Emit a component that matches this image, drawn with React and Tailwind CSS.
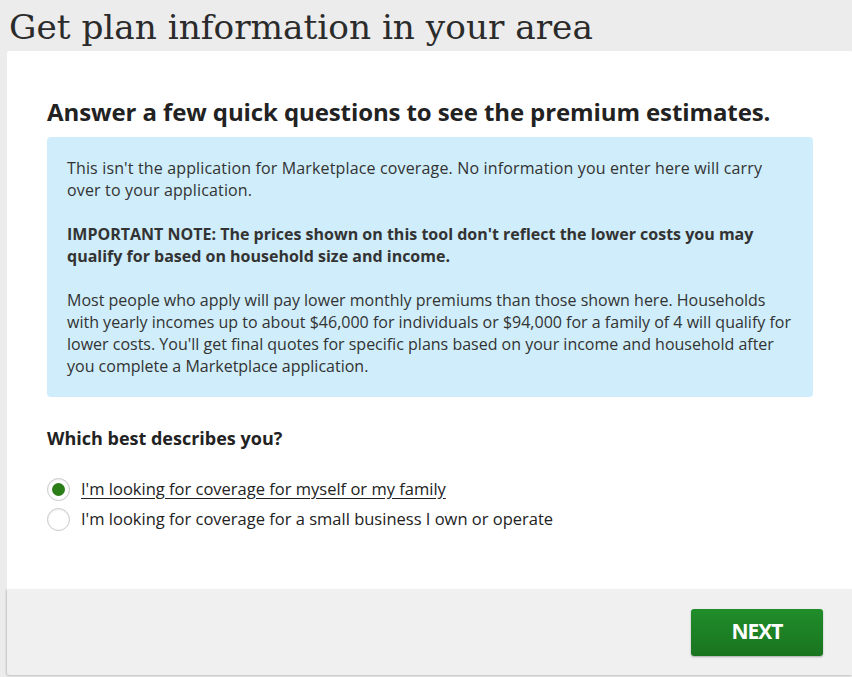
import React, { useState } from "react";

const options = [
  { id: "individual", label: "I'm looking for coverage for myself or my family" },
  { id: "business", label: "I'm looking for coverage for a small business I own or operate" },
];

const Radio = ({ checked, label, onChange, focused }) => (
  <label className="flex items-center h-[30px] cursor-pointer" onClick={onChange}>
    <span className="w-[23px] h-[23px] rounded-full border border-[#c8c8c8] bg-white shadow-[inset_0_1px_2px_rgba(0,0,0,0.08)] flex items-center justify-center shrink-0">
      {checked && <span className="w-[13px] h-[13px] rounded-full bg-[#2b7d17]" />}
    </span>
    <span className={"ml-[11px] text-[16.5px] text-[#222] " + (focused ? "underline underline-offset-[3px]" : "")}>
      {label}
    </span>
  </label>
);

const App = () => {
  const [choice, setChoice] = useState("individual");

  return (
    <div
      className="w-[852px] h-[677px] overflow-hidden bg-[#ececec]"
      style={{ fontFamily: "'Open Sans', 'Liberation Sans', sans-serif" }}
    >
      {/* page title */}
      <h1
        className="h-[51px] pl-[9px] pt-[6px] text-[34.3px] leading-[42px] text-[#2b2b2b]"
        style={{ fontFamily: "'DejaVu Serif', 'Liberation Serif', serif" }}
      >
        Get plan information in your area
      </h1>

      <div className="ml-[7px] w-[846px] rounded-t-[3px] bg-white">
        <div className="px-[40px] pt-[46px] pb-[44px] h-[538px]">
          <h2 className="text-[24px] font-bold leading-[30px] text-[#222] tracking-[-0.1px]">
            Answer a few quick questions to see the premium estimates.
          </h2>

          <div className="mt-[10px] rounded-[4px] bg-[#cfedfa] px-[20px] pt-[20px] pb-[20px] text-[16px] leading-[22px] text-[#333]">
            <p className="tracking-[0.15px]">
              This isn't the application for Marketplace coverage. No information you enter here will carry
              <br />
              over to your application.
            </p>
            <p className="mt-[22px] font-bold">
              IMPORTANT NOTE: The prices shown on this tool don't reflect the lower costs you may qualify
              for based on household size and income.
            </p>
            <p className="mt-[22px]">
              Most people who apply will pay lower monthly premiums than those shown here. Households with
              yearly incomes up to about $46,000 for individuals or $94,000 for a family of 4 will qualify
              for lower costs. You'll get final quotes for specific plans based on your income and household
              after you complete a Marketplace application.
            </p>
          </div>

          <h3 className="mt-[29px] text-[18px] font-bold leading-[24px] text-[#222]">
            Which best describes you?
          </h3>

          <div className="mt-[24px] flex flex-col">
            {options.map((o) => (
              <Radio
                key={o.id}
                label={o.label}
                checked={choice === o.id}
                focused={choice === o.id}
                onChange={() => setChoice(o.id)}
              />
            ))}
          </div>
        </div>

        <div className="h-[86px] bg-[#f0f0f0] rounded-b-[3px] shadow-[-1px_1px_2px_rgba(0,0,0,0.18)] flex items-center justify-end pr-[30px]">
          <button className="w-[132px] h-[47px] rounded-[3px] bg-gradient-to-b from-[#208d2a] to-[#1a741f] shadow-[0_1px_2px_rgba(0,0,0,0.3)] text-white text-[21px] font-bold tracking-[-1px]">
            NEXT
          </button>
        </div>
      </div>
    </div>
  );
};

export default App;
